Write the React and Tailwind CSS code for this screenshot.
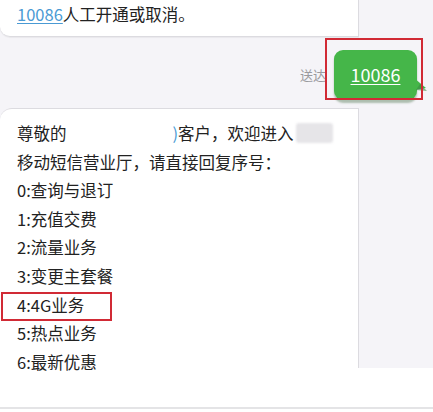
export default function App() {
  const font = { fontFamily: '"Noto Sans CJK SC", "Noto Sans", sans-serif' };
  const lines = [
    "0:查询与退订",
    "1:充值交费",
    "2:流量业务",
    "3:变更主套餐",
  ];
  return (
    <div className="w-[433px] h-[412px] bg-[#f5f4f8] flex flex-col overflow-hidden text-[#222]" style={font}>
      <div className="w-[359px] h-[37px] bg-white rounded-bl-[10px] border-r border-b border-[#dcdbe0] shadow-[0_1px_1px_rgba(0,0,0,0.05)] flex items-start pl-[17px] pt-[1px] text-[16.5px] leading-[26px] shrink-0">
        <span className="text-[#4a9ad4] underline underline-offset-2 decoration-1">10086</span>
        <span>人工开通或取消。</span>
      </div>
      <div className="h-[71px] shrink-0 relative flex items-center justify-end pr-[16px]">
        <span className="text-[13px] text-[#9a9a9e] mr-[8px] mt-[4px]">送达</span>
        <div className="relative w-[83px] h-[50px] mt-[4px]">
          <div className="absolute inset-0 rounded-[9px] bg-[#45b649] shadow-[0_3px_2px_rgba(40,90,40,0.35)] flex items-center justify-center">
            <span className="text-white text-[18px] underline underline-offset-2 decoration-1">10086</span>
          </div>
          <svg className="absolute left-[80px] top-[28px]" width="16" height="14" viewBox="0 0 16 14">
            <path d="M0 0 L12 10 L0 12 Z" fill="#45b649" />
            <path d="M6 6 L13 13 L2 12 Z" fill="#3a8a45" opacity="0.6" />
          </svg>
          <div className="absolute left-[-9px] top-[-12px] w-[98px] h-[62px] border-2 border-[#d12a35]"></div>
        </div>
      </div>
      <div className="relative z-10 w-[359px] h-[260px] shrink-0 bg-white rounded-tl-[12px] border-t border-r border-[#dcdbe0] pl-[17px] pt-[10px] text-[16.5px] leading-[28.6px]">
        <div className="flex items-center">
          <span>尊敬的</span>
          <span className="w-[114px] h-[20px] bg-white"></span>
          <span className="text-[#4a9ad4] -ml-[8px]">)</span>
          <span>客户，欢迎进入</span>
          <span className="inline-block ml-[2px] w-[37px] h-[20px] bg-[#e6e5e8] blur-[1px] rounded-[3px]"></span>
        </div>
        <div>移动短信营业厅，请直接回复序号：</div>
        {lines.map((l) => (
          <div key={l}>{l}</div>
        ))}
        <div className="relative">
          4:4G业务
          <span className="absolute left-[-16px] top-[1px] w-[111px] h-[29px] border-2 border-[#d12a35]"></span>
        </div>
        <div>5:热点业务</div>
        <div>6:最新优惠</div>
      </div>
      <div className="flex-1 bg-white flex flex-col justify-end">
        <div className="h-[2px] mb-[3px] bg-[#e4e4e6]"></div>
      </div>
    </div>
  );
}
